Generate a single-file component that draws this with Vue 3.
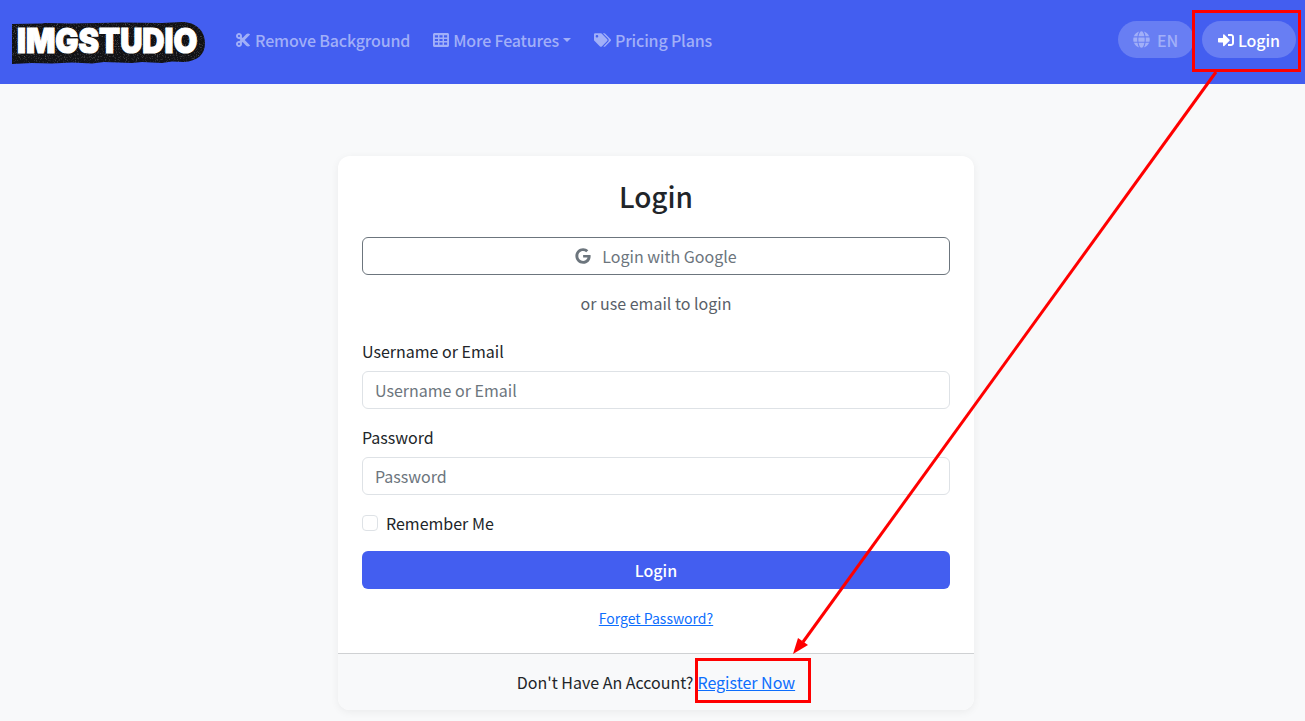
<template>
  <div class="page">
    <nav class="navbar">
      <a class="logo" href="#">
        <svg class="logo-art" width="193" height="42" viewBox="0 0 193 42">
          <defs>
            <filter id="grain" x="0" y="0" width="100%" height="100%">
              <feTurbulence type="fractalNoise" baseFrequency="0.9" numOctaves="2" seed="4" />
              <feColorMatrix values="0 0 0 0 1  0 0 0 0 1  0 0 0 0 1  1.6 0 0 0 -0.85" />
              <feComposite in2="SourceGraphic" operator="in" />
            </filter>
          </defs>
          <path :d="blob" fill="#111114" />
          <path :d="blob" fill="#fff" filter="url(#grain)" opacity="0.55" />
          <text transform="translate(5 31) scale(0.905 1)" class="logo-text">IMGSTUDIO</text>
        </svg>
      </a>
      <ul class="nav-links">
        <li v-for="link in links" :key="link.label">
          <a href="#">
            <svg class="nav-icon" :width="link.w" height="16" :viewBox="link.box" fill="currentColor">
              <path :d="link.d" fill-rule="evenodd" />
            </svg>
            <span>{{ link.label }}</span>
            <i v-if="link.caret" class="caret"></i>
          </a>
        </li>
      </ul>
      <div class="nav-right">
        <button class="pill pill-lang">
          <svg width="17" height="17" viewBox="0 0 496 512" fill="currentColor"><path :d="icons.globe" /></svg>
          <span>EN</span>
        </button>
        <button class="pill pill-login">
          <svg width="16" height="16" viewBox="0 0 512 512" fill="currentColor"><path :d="icons.signIn" /></svg>
          <span>Login</span>
        </button>
      </div>
    </nav>

    <main class="content">
      <div class="card">
        <div class="card-body">
          <h1>Login</h1>
          <button class="google-btn" type="button">
            <svg width="16" height="16" viewBox="0 0 488 512" fill="currentColor"><path :d="icons.google" /></svg>
            <span>Login with Google</span>
          </button>
          <p class="divider-text">or use email to login</p>
          <label class="field-label" for="user">Username or Email</label>
          <input id="user" class="field" type="text" placeholder="Username or Email" />
          <label class="field-label second" for="pass">Password</label>
          <input id="pass" class="field" type="password" placeholder="Password" />
          <label class="remember">
            <input type="checkbox" />
            <span>Remember Me</span>
          </label>
          <button class="submit-btn" type="button">Login</button>
          <a class="forget" href="#">Forget Password?</a>
        </div>
        <div class="card-footer">
          Don't Have An Account? <a href="#">Register Now</a>
        </div>
      </div>
    </main>

    <svg class="annotations" width="1305" height="721" viewBox="0 0 1305 721">
      <rect x="1193.5" y="11.5" width="106" height="59" />
      <rect x="696.5" y="659.5" width="113" height="42" />
      <line x1="1216" y1="72" x2="803" y2="642" />
      <polygon points="793,654 798,638 808,645" />
    </svg>
  </div>
</template>

<script setup>
const blob = 'M0 2 L30 1.5 L33 1 L60 1.5 L110 0.5 L150 1 L170 0 C184 0 193 9 193 21 C193 33 185 39 172 40 L160 39.5 L150 41 L130 40 L120 41 L92 40 L80 41.5 L60 40.5 L40 41.5 L20 41 L0 42 Z'

const icons = {
  globe: 'M336.5 160C322 70.7 287.8 8 248 8s-74 62.7-88.5 152h177zM152 256c0 22.2 1.2 43.5 3.3 64h185.3c2.1-20.5 3.3-41.8 3.3-64s-1.2-43.5-3.3-64H155.3c-2.1 20.5-3.3 41.8-3.3 64zm324.7-96c-28.6-67.9-86.5-120.4-158-141.6 24.4 33.8 41.2 84.7 50 141.6h108zM177.2 18.4C105.8 39.6 47.8 92.1 19.3 160h108c8.7-56.9 25.5-107.8 49.9-141.6zM487.4 192H372.7c2.1 21 3.3 42.5 3.3 64s-1.2 43-3.3 64h114.6c5.5-20.5 8.6-41.8 8.6-64s-3.1-43.5-8.5-64zM120 256c0-21.5 1.2-43 3.3-64H8.6C3.2 212.5 0 233.8 0 256s3.2 43.5 8.6 64h114.6c-2-21-3.2-42.5-3.2-64zm39.5 96c14.5 89.3 48.7 152 88.5 152s74-62.7 88.5-152h-177zm159.3 141.6c71.4-21.2 129.4-73.7 158-141.6h-108c-8.8 56.9-25.6 107.8-50 141.6zM19.3 352c28.6 67.9 86.5 120.4 158 141.6-24.4-33.8-41.2-84.7-50-141.6h-108z',
  signIn: 'M416 448h-84c-6.6 0-12-5.4-12-12v-40c0-6.6 5.4-12 12-12h84c17.7 0 32-14.3 32-32V160c0-17.7-14.3-32-32-32h-84c-6.6 0-12-5.4-12-12V76c0-6.6 5.4-12 12-12h84c53 0 96 43 96 96v192c0 53-43 96-96 96zm-47-201L201 79c-15-15-41-4.5-41 17v96H24c-13.3 0-24 10.7-24 24v96c0 13.3 10.7 24 24 24h136v96c0 21.5 26 32 41 17l168-168c9.3-9.4 9.3-24.6 0-34z',
  google: 'M488 261.8C488 403.3 391.1 504 248 504 110.8 504 0 393.2 0 256S110.8 8 248 8c66.8 0 123 24.5 166.3 64.9l-67.5 64.9C258.5 52.6 94.3 116.6 94.3 256c0 86.5 69.1 156.6 153.7 156.6 98.2 0 135-70.4 140.8-106.9H248v-85.3h236.1c2.3 12.7 3.9 24.9 3.9 41.4z',
}

const links = [
  {
    label: 'Remove Background',
    w: 16,
    box: '0 0 448 512',
    d: 'M278.06 256L444.48 89.57c4.69-4.69 4.69-12.29 0-16.97-32.8-32.8-85.99-32.8-118.79 0L210.18 188.12l-24.86-24.86c4.31-10.92 6.68-22.81 6.68-35.26 0-53.02-42.98-96-96-96S0 74.98 0 128s42.98 96 96 96c4.54 0 8.99-.32 13.36-.93L142.29 256l-32.93 32.93c-4.37-.61-8.83-.93-13.36-.93-53.02 0-96 42.98-96 96s42.98 96 96 96 96-42.98 96-96c0-12.45-2.37-24.34-6.68-35.26l24.86-24.86L325.69 439.4c32.8 32.8 85.99 32.8 118.79 0 4.69-4.68 4.69-12.28 0-16.97L278.06 256zM96 160c-17.64 0-32-14.36-32-32s14.36-32 32-32 32 14.36 32 32-14.36 32-32 32zm0 256c-17.64 0-32-14.36-32-32s14.36-32 32-32 32 14.36 32 32-14.36 32-32 32z',
  },
  {
    label: 'More Features',
    w: 16,
    box: '0 0 512 512',
    caret: true,
    d: 'M48 32h416c26 0 48 22 48 48v352c0 26-22 48-48 48H48c-26 0-48-22-48-48V80c0-26 22-48 48-48zM60 105v70h100v-70zm146 0v70h100v-70zm146 0v70h100v-70zM60 221v70h100v-70zm146 0v70h100v-70zm146 0v70h100v-70zM60 337v70h100v-70zm146 0v70h100v-70zm146 0v70h100v-70z',
  },
  {
    label: 'Pricing Plans',
    w: 17,
    box: '0 0 640 512',
    d: 'M497.941 225.941L286.059 14.059A48 48 0 0 0 252.118 0H48C21.49 0 0 21.49 0 48v204.118a48 48 0 0 0 14.059 33.941l211.882 211.882c18.744 18.745 49.136 18.746 67.882 0l204.118-204.118c18.745-18.745 18.745-49.137 0-67.882zM112 160c-26.51 0-48-21.49-48-48s21.49-48 48-48 48 21.49 48 48-21.49 48-48 48zm513.941 133.823L421.823 497.941c-18.745 18.745-49.137 18.745-67.882 0l-.36-.36L527.64 323.522c16.999-16.999 26.36-39.6 26.36-63.64s-9.362-46.641-26.36-63.64L331.397 0h48.721a48 48 0 0 1 33.941 14.059l211.882 211.882c18.745 18.745 18.745 49.137 0 67.882z',
  },
]
</script>

<style>
body {
  background: #f8f9fa;
}
</style>

<style scoped>
.page {
  position: relative;
  min-height: 721px;
  font-family: "Noto Sans CJK SC", "Noto Sans", sans-serif;
  font-size: 16px;
  line-height: 1.5;
  color: #212529;
  background: #f8f9fa;
}
.navbar {
  height: 84px;
  box-sizing: border-box;
  padding: 0 9px 2px 12px;
  display: flex;
  align-items: center;
  background: #435ef0;
}
.logo {
  display: block;
  height: 42px;
  margin-top: 4px;
}
.logo-art {
  overflow: visible;
}
.logo-text {
  font-family: Inter, "Liberation Sans", sans-serif;
  font-weight: 900;
  font-size: 34px;
  fill: #fff;
  stroke: #fff;
  stroke-width: 1.2px;
}
.nav-links {
  list-style: none;
  margin: -2px 0 0 30px;
  padding: 0;
  display: flex;
  align-items: center;
  gap: 23px;
}
.nav-links a {
  display: flex;
  align-items: center;
  gap: 4px;
  color: #a1aff8;
  font-size: 16px;
  font-weight: 500;
  letter-spacing: -0.17px;
  text-decoration: none;
}
.caret {
  width: 0;
  height: 0;
  border-top: 4px solid currentColor;
  border-left: 4px solid transparent;
  border-right: 4px solid transparent;
}
.nav-right {
  margin-left: auto;
  margin-top: -3px;
  display: flex;
  gap: 8px;
}
.pill {
  height: 37px;
  padding-top: 1px;
  border: none;
  border-radius: 19px;
  display: flex;
  align-items: center;
  font-family: inherit;
  font-size: 16px;
  font-weight: 500;
  letter-spacing: -0.1px;
  background: rgba(255, 255, 255, 0.2);
}
.pill-lang {
  width: 76px;
  padding-left: 15px;
  padding-right: 15px;
  gap: 7px;
  color: #a1aff8;
}
.pill-login {
  width: 94px;
  padding-left: 16px;
  padding-right: 16px;
  gap: 4px;
  color: #fff;
}
.content {
  display: flex;
  justify-content: center;
  padding: 72px 0 0 7px;
}
.card {
  width: 636px;
  height: 554px;
  display: flex;
  flex-direction: column;
  background: #fff;
  border-radius: 12px;
  box-shadow: 0 2px 8px rgba(0, 0, 0, 0.06);
  overflow: hidden;
}
.card-body {
  flex: 1;
  padding: 17px 24px 0;
  display: flex;
  flex-direction: column;
}
h1 {
  margin: 0 0 17px;
  font-size: 28px;
  font-weight: 500;
  line-height: 47px;
  text-align: center;
}
.google-btn {
  height: 38px;
  box-sizing: border-box;
  border: 1px solid #6c757d;
  border-radius: 6px;
  background: #fff;
  color: #6c757d;
  display: flex;
  align-items: center;
  justify-content: center;
  gap: 11px;
  font-family: inherit;
  font-size: 16px;
}
.divider-text {
  margin: 16px 0 0;
  line-height: 24px;
  text-align: center;
  color: #595f69;
}
.field-label {
  margin: 24px 0 8px;
  line-height: 24px;
}
.field-label.second {
  margin-top: 16px;
}
.field {
  height: 38px;
  box-sizing: border-box;
  padding: 0 12px;
  border: 1px solid #dee2e6;
  border-radius: 6px;
  font-family: inherit;
  font-size: 16px;
  color: #212529;
  outline: none;
}
.field::placeholder {
  color: #6c757d;
  opacity: 1;
}
.remember {
  margin-top: 16px;
  display: flex;
  align-items: center;
  gap: 8px;
  line-height: 24px;
}
.remember input {
  appearance: none;
  width: 16px;
  height: 16px;
  margin: 0;
  border: 1px solid #dee2e6;
  border-radius: 4px;
  background: #fff;
}
.submit-btn {
  height: 38px;
  margin-top: 16px;
  border: none;
  border-radius: 6px;
  background: #435ef0;
  color: #fff;
  font-family: inherit;
  font-size: 16px;
  font-weight: 500;
}
.forget {
  margin-top: 19px;
  align-self: center;
  font-size: 14px;
  line-height: 21px;
  color: #0d6efd;
}
.card-footer {
  height: 57px;
  box-sizing: border-box;
  border-top: 1px solid #cfd1d3;
  background: #f8f9fa;
  display: flex;
  align-items: center;
  justify-content: center;
  gap: 4px;
}
.card-footer a {
  color: #0d6efd;
}
.annotations {
  position: absolute;
  left: 0;
  top: 0;
  pointer-events: none;
}
.annotations rect {
  fill: none;
  stroke: #ff0000;
  stroke-width: 3px;
}
.annotations line {
  stroke: #ff0000;
  stroke-width: 3px;
}
.annotations polygon {
  fill: #ff0000;
}
</style>
